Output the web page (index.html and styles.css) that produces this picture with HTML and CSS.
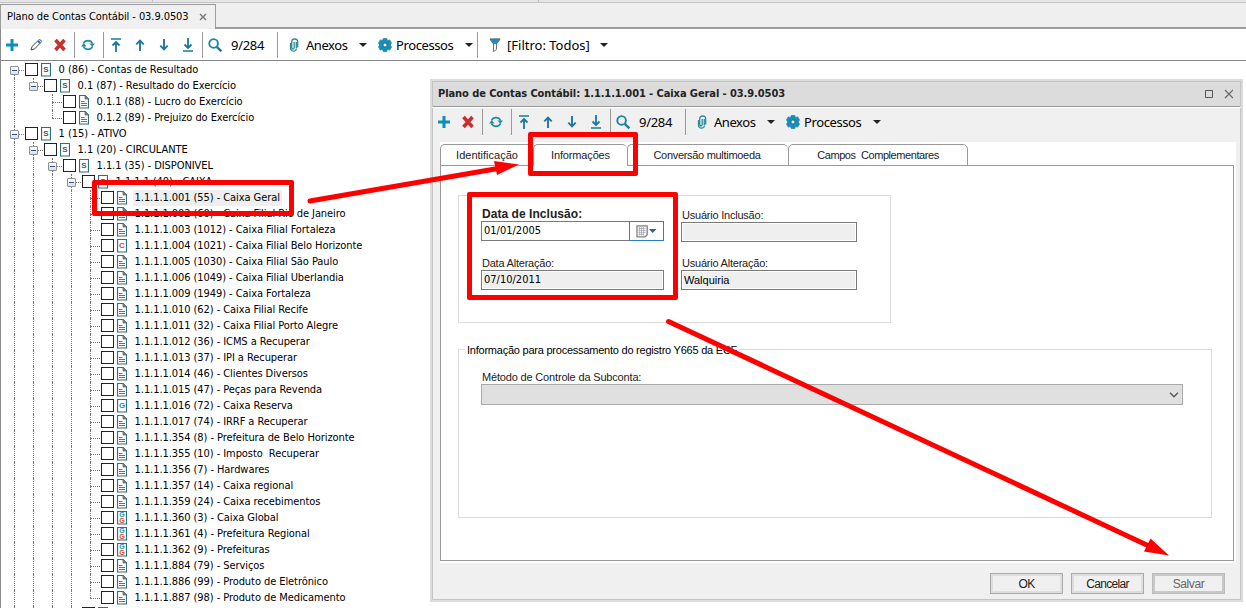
FILE: index.html
```html
<!DOCTYPE html>
<html lang="pt-BR">
<head>
  <meta charset="UTF-8" />
  <title>Plano de Contas Contábil</title>
  <link rel="stylesheet" href="styles.css">
</head>
<body>

  <svg class="sprite">
    <symbol id="i-plus" viewBox="0 0 12 12"><path d="M6 0v12M0 6h12" stroke="#0d8dba" stroke-width="3"/></symbol>
    <symbol id="i-pencil" viewBox="0 0 12 12"><path d="M1 11l1-3.500L8.500 1.200q1.300-1 2.300 0t0 2.300L4.500 10z" fill="#fff" stroke="#3b4a55"/><path d="M8 2l2 2" stroke="#2a6fb5" stroke-width="2"/></symbol>
    <symbol id="i-del" viewBox="0 0 12 12"><path d="M1.500 1l9 10M10.500 1l-9 10" stroke="#c62f2a" stroke-width="3.600"/></symbol>
    <symbol id="i-refresh" viewBox="0 0 14 12"><path d="M2.500 4.500A4.900 4.900 0 0 1 11.500 4.500M11.500 7.500A4.900 4.900 0 0 1 2.500 7.500" fill="none" stroke="#1e8c9b" stroke-width="1.700"/><path d="M8.500 4.500H14L11.300 7.800zM0 7.500h5.500L2.700 4.200z" fill="#1e8c9b"/></symbol>
    <symbol id="i-first" viewBox="0 0 12 14"><path d="M1 1h10" stroke="#1d8a94" stroke-width="1.600"/><path d="M6 14V5M2.500 7.500L6 4l3.500 3.500" fill="none" stroke="#1c75a6" stroke-width="1.800"/></symbol>
    <symbol id="i-up" viewBox="0 0 12 14"><path d="M6 13V3M2.300 6.300L6 2.600l3.700 3.700" fill="none" stroke="#1c75a6" stroke-width="1.900"/></symbol>
    <symbol id="i-down" viewBox="0 0 12 14"><path d="M6 1v10M2.300 7.700L6 11.400l3.700-3.700" fill="none" stroke="#1c75a6" stroke-width="1.900"/></symbol>
    <symbol id="i-last" viewBox="0 0 12 14"><path d="M1 13h10" stroke="#1d8a94" stroke-width="1.600"/><path d="M6 0v9M2.500 6.500L6 10l3.500-3.500" fill="none" stroke="#1c75a6" stroke-width="1.800"/></symbol>
    <symbol id="i-search" viewBox="0 0 14 14"><circle cx="5.600" cy="5.400" r="4.300" fill="none" stroke="#1d86a3" stroke-width="1.900"/><path d="M8.800 8.800l4.500 4.500" stroke="#1d7f94" stroke-width="2.400"/></symbol>
    <symbol id="i-clip" viewBox="0 0 10 14"><path d="M5.200 4v6M1.500 5v5.500q.5 2.700 3 2.700t3-2.700M8.700 9.500V4q0-3-3-3t-3 3v5.500q.3 1.500 1.300 1.500t1.200-1.500M7.300 4v6" fill="none" stroke="#2b8d9c" stroke-width="1.300"/></symbol>
    <symbol id="i-gear" viewBox="0 0 14 14"><path d="M5.300.5h3.400l.7 2 2.300-.6 1.800 3L12.200 7l1.300 2.100-1.800 3-2.300-.6-.7 2H5.300l-.7-2-2.300.6-1.800-3L1.800 7 .5 4.900l1.800-3 2.300.6z" fill="#0a94c4" stroke="#3f7f96" stroke-width=".8"/><circle cx="7" cy="7" r="2.100" fill="#fff" stroke="#3a5c70"/></symbol>
    <symbol id="i-filter" viewBox="0 0 12 14"><path d="M1 1h10L7.500 6v5.500l-3 2V6z" fill="#fff" stroke="#68767c"/><path d="M1 1h10L7.500 5.500h-3z" fill="#0d94c6" stroke="#5a6c74" stroke-width=".8"/></symbol>
    <symbol id="i-doc" viewBox="0 0 10 14"><path d="M.5.5h5.500l3.500 3.500v9H.5z" fill="#fff" stroke="#376d76" stroke-width="1.200"/><path d="M6 .5V4h3.500z" fill="#7d878b" stroke="#555f63" stroke-width=".7"/><path d="M2 6.500h3.500M2 8.500h6M2 10.500h6" stroke="#168cc0"/></symbol>
    <symbol id="i-card" viewBox="0 0 10 14"><path d="M.5.5h9v12.500h-9z" fill="#fff" stroke="#2f6f76" stroke-width="1.200"/></symbol>
  </svg>

  <div class="strip"><i></i><i></i></div>
  <div class="page-tabs">
    <div class="page-tab"><span>Plano de Contas Contábil - 03.9.0503</span>
      <svg width="8" height="8" viewBox="0 0 8 8"><path d="M1 1l6 6M7 1l-6 6" stroke="#777" stroke-width="1.400"/></svg>
    </div>
  </div>

  <div class="toolbar main-bar">
    <svg class="w12"><use href="#i-plus"/></svg>
    <svg class="w12"><use href="#i-pencil"/></svg>
    <svg class="w12"><use href="#i-del"/></svg>
    <b class="sep"></b>
    <svg class="w14"><use href="#i-refresh"/></svg>
    <b class="sep"></b>
    <svg class="w12"><use href="#i-first"/></svg>
    <svg class="w12"><use href="#i-up"/></svg>
    <svg class="w12"><use href="#i-down"/></svg>
    <svg class="w12"><use href="#i-last"/></svg>
    <b class="sep"></b>
    <svg class="w14 find"><use href="#i-search"/></svg>
    <span class="counter">9/284</span>
    <b class="sep"></b>
    <svg class="w10 clip"><use href="#i-clip"/></svg>
    <span class="t-anexos">Anexos</span><i class="arrow"></i>
    <svg class="w14 gear"><use href="#i-gear"/></svg>
    <span class="t-proc">Processos</span><i class="arrow"></i>
    <b class="sep tight"></b>
    <svg class="w12 filter"><use href="#i-filter"/></svg>
    <span class="t-filtro">[Filtro: Todos]</span><i class="arrow"></i>
  </div>

  <div class="tree" id="tree"></div>

  <div class="dialog">
    <div class="title">
      <span>Plano de Contas Contábil: 1.1.1.1.001 - Caixa Geral - 03.9.0503</span>
      <svg width="28" height="10" viewBox="0 0 28 10"><path d="M.5 1.500h7v7h-7z" fill="none" stroke="#555"/><path d="M20 1l8 8M28 1l-8 8" stroke="#666" stroke-width="1.200"/></svg>
    </div>
    <div class="toolbar dialog-bar">
      <svg class="w12"><use href="#i-plus"/></svg>
      <svg class="w12"><use href="#i-del"/></svg>
      <b class="sep"></b>
      <svg class="w14"><use href="#i-refresh"/></svg>
      <b class="sep"></b>
      <svg class="w12"><use href="#i-first"/></svg>
      <svg class="w12"><use href="#i-up"/></svg>
      <svg class="w12"><use href="#i-down"/></svg>
      <svg class="w12"><use href="#i-last"/></svg>
      <b class="sep"></b>
      <svg class="w14 find"><use href="#i-search"/></svg>
      <span class="counter">9/284</span>
      <b class="sep"></b>
      <svg class="w10 clip"><use href="#i-clip"/></svg>
      <span class="t-anexos">Anexos</span><i class="arrow"></i>
      <svg class="w14 gear"><use href="#i-gear"/></svg>
      <span class="t-proc">Processos</span><i class="arrow"></i>
    </div>
    <div class="pages">
      <div class="tabs">
        <div class="tab tab-id">Identificação</div>
        <div class="tab tab-info active">Informações</div>
        <div class="tab tab-conv">Conversão multimoeda</div>
        <div class="tab tab-comp">Campos&nbsp; Complementares</div>
      </div>
      <div class="content">
        <div class="group dates">
          <div class="field">
            <label class="strong">Data de Inclusão:</label>
            <div class="input date"><span>01/01/2005</span>
              <div class="picker"><svg width="22" height="13" viewBox="0 0 22 13"><path d="M1 .8h10.200v9l-2 2H1z" fill="#f5f5f5" stroke="#8a8080" stroke-width="1.300"/><path d="M2.500 3.500h7M2.500 5.500h7M2.500 7.500h7M2.500 9.500h5M3.500 2v8.500M5.500 2v8.500M7.500 2v8.500" stroke="#a5adba" stroke-width=".8"/><path d="M13 4h7.500L16.700 8z" fill="#3e5c8c"/></svg></div>
            </div>
          </div>
          <div class="field right">
            <label>Usuário Inclusão:</label>
            <div class="input off"></div>
          </div>
          <div class="field">
            <label>Data Alteração:</label>
            <div class="input off"><span>07/10/2011</span></div>
          </div>
          <div class="field right">
            <label>Usuário Alteração:</label>
            <div class="input off"><span class="user">Walquiria</span></div>
          </div>
        </div>
        <div class="group ecf">
          <div class="legend"><span>Informação para processamento do registro Y665 da ECF</span></div>
          <label>Método de Controle da Subconta:</label>
          <div class="select"><svg width="10" height="6" viewBox="0 0 10 6"><path d="M1 .8l4 4 4-4" fill="none" stroke="#555" stroke-width="1.300"/></svg></div>
        </div>
      </div>
    </div>
    <div class="buttons">
      <div class="btn">OK</div>
      <div class="btn">Cancelar</div>
      <div class="btn disabled">Salvar</div>
    </div>
  </div>

  <div class="mark mark-node"></div>
  <div class="mark mark-tab"></div>
  <div class="mark mark-dates"></div>
  <svg class="arrows" width="1246" height="608" viewBox="0 0 1246 608">
    <path d="M310 201L498 168.500M668.500 321.500L1150 546.500" stroke="#f00" stroke-width="5" stroke-linecap="round"/>
    <path d="M519 164.500L494 161l3 14zM1169 555.500L1150.500 538.500l-6.500 13z" fill="#f00"/>
  </svg>

  <script src="script.js"></script>
</body>
</html>
```

FILE: styles.css
```css
body {
  margin: 0;
  width: 1246px;
  height: 608px;
  overflow: hidden;
  position: relative;
  background: #fff;
  color: #000;
  font-family: "DejaVu Sans Condensed", "DejaVu Sans", sans-serif;
  font-stretch: condensed;
  font-size: 11px;
  line-height: 16px;
  white-space: nowrap;
}
* {
  box-sizing: border-box;
}
.sprite {
  display: none;
}
svg {
  display: block;
  flex: none;
}

/* top tabs */
.strip {
  height: 3px;
  background: #e5e5e5;
  border-bottom: 1px solid #c4c4c4;
  display: flex;
}
.strip i {
  width: 153px;
  border-right: 1px solid #c0c0c0;
}
.strip i + i {
  width: 386px;
}
.page-tabs {
  height: 26px;
  padding-top: 1px;
  background: #efefef;
  box-shadow: inset 0 -2px #9d9d9d;
}
.page-tab {
  width: 216px;
  height: 25px;
  padding: 0 8px 1px 6px;
  display: flex;
  align-items: center;
  justify-content: space-between;
  background: #f0f0f0;
  border: 1px solid #9d9d9d;
  border-bottom: 0;
}
.page-tab span {
  letter-spacing: -0.08px;
}

/* toolbars */
.toolbar {
  display: flex;
  align-items: center;
  font-family: "Noto Sans", sans-serif;
  font-size: 13px;
}
.toolbar svg {
  height: 14px;
  margin-right: 12px;
}
.w10 { width: 10px; }
.w12 { width: 12px; }
.w14 { width: 14px; }
.main-bar {
  height: 32px;
  padding-left: 5px;
  border-left: 1px solid #8c8c8c;
  border-bottom: 1px solid #85858c;
}
.sep {
  width: 1px;
  height: 26px;
  margin: 0 6px 0 -4px;
  background: #999;
}
.toolbar .find {
  margin: 0 9px 0 -1px;
}
.counter {
  width: 50px;
  letter-spacing: -0.3px;
}
.toolbar .clip {
  margin: 0 7px 0 5px;
}
.t-anexos {
  width: 53px;
  letter-spacing: -0.45px;
}
.t-proc {
  width: 69px;
  letter-spacing: -0.4px;
}
.t-filtro {
  width: 93px;
}
.arrow {
  width: 0;
  border: 4px solid transparent;
  border-top: 4px solid #222;
  border-bottom: 0;
}
.toolbar .gear {
  margin: 0 4px 0 11px;
}
.sep.tight {
  margin: 0 11px 0 4px;
}
.toolbar .filter {
  margin-right: 6px;
}

/* tree */
.tree {
  height: 547px;
  padding-top: 1px;
  border-left: 1px solid #8c8c8c;
  overflow: hidden;
}
.row {
  display: flex;
  height: 16px;
  padding-left: 4px;
  align-items: flex-start;
}
.cell {
  width: 19px;
  height: 16px;
  flex: none;
  position: relative;
}
.cell.down::before,
.cell.half::before,
.cell.under::before {
  content: "";
  position: absolute;
  left: 9px;
  top: 0;
  height: 16px;
  border-left: 1px dotted #777;
}
.cell.half::before {
  height: 8px;
}
.cell.under::before {
  top: 8px;
  height: 8px;
}
.cell.dash::after {
  content: "";
  position: absolute;
  left: 9px;
  top: 8px;
  width: 10px;
  border-top: 1px dotted #777;
}
.toggle {
  position: absolute;
  z-index: 1;
  left: 5px;
  top: 4px;
  width: 9px;
  height: 9px;
  background: linear-gradient(#fff, #ddd);
  border: 1px solid #919191;
  border-radius: 1px;
}
.toggle::after {
  content: "";
  display: block;
  width: 5px;
  height: 1px;
  margin: 3px 1px;
  background: #31509c;
}
.check {
  width: 13px;
  height: 13px;
  margin: 1px 3px 0 1px;
  flex: none;
  border: 1px solid #222;
  background: #fff;
}
.icon {
  position: relative;
  width: 10px;
  height: 14px;
  margin-top: 1px;
  flex: none;
}
.icon span {
  position: absolute;
  inset: 0;
  text-align: center;
  font: bold 8px/14px "Liberation Sans", sans-serif;
}
.icon .s { color: #555; }
.icon .r { color: #cf4436; }
.icon .g { color: #1a86be; }
.icon .top,
.icon .bottom {
  top: -3px;
  font-size: 7px;
}
.icon .bottom {
  top: 3px;
}
.name {
  height: 16px;
  margin-left: 5.6px;
  padding: 0 2px;
  letter-spacing: -0.07px;
}
.name.selected {
  background: #efefef;
}

/* dialog */
.dialog {
  position: absolute;
  left: 430px;
  top: 79px;
  width: 813px;
  height: 523px;
  border: 2px solid #dcdcdc;
  background: #f0f0f0;
  box-shadow: inset 0 0 0 1px #c4c4c4;
}
.title {
  height: 25px;
  margin: 1px 1px 0;
  padding: 0 7px 1px 5px;
  display: flex;
  align-items: center;
  justify-content: space-between;
  background: #dcdcdc;
  border-bottom: 1px solid #999;
  font-weight: bold;
  letter-spacing: -0.08px;
  color: #222;
}
.dialog-bar {
  height: 34px;
  padding: 0 0 5px 6px;
  border-top: 1px solid #fff;
}
.pages {
  width: 796px;
  height: 421px;
  margin: 1px 0 0 8px;
  padding-top: 2px;
  background: #fff;
}
.tabs {
  display: flex;
  font-family: "Liberation Sans", Arial, sans-serif;
  letter-spacing: -0.3px;
  color: #222;
}
.tab {
  height: 22px;
  padding-top: 2px;
  text-align: center;
  border: 1px solid #999;
  border-right: 0;
  border-radius: 5px 5px 0 0;
}
.tab:last-child {
  border-right: 1px solid #999;
  letter-spacing: -0.42px;
}
.tab.active {
  border-bottom-color: #fff;
}
.tab-id {
  width: 93px;
  letter-spacing: 0;
}
.tab-info {
  width: 94px;
  letter-spacing: -0.15px;
}
.tab-conv {
  width: 161px;
  padding-right: 2px;
}
.tab-comp { width: 180px; }
.content {
  width: 794px;
  height: 396px;
  margin-top: -1px;
  padding: 30px 21px 0 17px;
  border: 1px solid #999;
  border-top: 0;
  background: linear-gradient(#999, #999) 0 0 / 93px 1px no-repeat,
    linear-gradient(#999, #999) 187px 0 / 610px 1px no-repeat;
}
.group {
  border: 1px solid #dcdcdc;
  font-family: "Liberation Sans", Arial, sans-serif;
  color: #222;
}
.dates {
  width: 433px;
  height: 128px;
  padding: 11px 0 0 22px;
  display: grid;
  grid-template-columns: 200px 176px;
  grid-auto-rows: 48px;
  align-content: start;
}
.field {
  width: 183px;
}
.field.right {
  width: 176px;
}
label {
  display: block;
  height: 15px;
  margin-left: 1px;
  line-height: 17px;
  letter-spacing: -0.22px;
}
.strong {
  height: 14px;
  line-height: 15px;
  font-weight: bold;
  font-size: 12px;
  letter-spacing: 0.05px;
}
.input {
  height: 20px;
  display: flex;
  justify-content: space-between;
  padding-left: 2px;
  line-height: 18px;
  color: #000;
  border: 1px solid #7a7a7a;
  background: #fff;
}
.input.off {
  background: #efefef;
  box-shadow: inset 0 0 0 1px #fff;
}
.input span {
  font-family: "DejaVu Sans Condensed", sans-serif;
}
.input .user {
  font-family: "Liberation Sans", Arial, sans-serif;
}
.picker {
  width: 35px;
  margin: -1px;
  padding: 3px 0 0 6px;
  border: 1px solid #2a80d0;
}
.ecf {
  height: 169px;
  margin-top: 26px;
  padding-left: 22px;
}
.legend {
  height: 19px;
  margin: -8px 0 0 -16px;
  letter-spacing: -0.23px;
  color: #000;
}
.legend span {
  display: inline-block;
  padding: 0 2px;
  background: #fff;
}
.ecf label {
  margin-top: 8px;
  letter-spacing: -0.17px;
}
.select {
  width: 702px;
  height: 21px;
  display: flex;
  justify-content: flex-end;
  align-items: center;
  padding-right: 3px;
  background: #e0e0e0;
  border: 1px solid #aaa;
}
.buttons {
  display: flex;
  justify-content: flex-end;
  gap: 8px;
  margin: 10px 16px 0 0;
  font-family: "Liberation Sans", Arial, sans-serif;
  font-size: 12px;
}
.btn {
  width: 73px;
  height: 21px;
  line-height: 20px;
  text-align: center;
  color: #222;
  letter-spacing: -0.7px;
  border: 1px solid #aaa;
  box-shadow: inset 0 0 0 2px #dedede;
}
.btn.disabled {
  color: #666;
  letter-spacing: -0.4px;
  border-color: #bbb;
  box-shadow: inset 0 0 0 2px #c8c8c8;
}

/* highlights */
.mark {
  position: absolute;
  border: 5px solid #f00;
  border-radius: 2px;
}
.mark-node {
  left: 92px;
  top: 180px;
  width: 202px;
  height: 36px;
}
.mark-tab {
  left: 528px;
  top: 132px;
  width: 110px;
  height: 44px;
}
.mark-dates {
  left: 467px;
  top: 192px;
  width: 211px;
  height: 108px;
}
.arrows {
  position: absolute;
  left: 0;
  top: 0;
}
```

FILE: script.js
```js
// level, icon, text
const accounts = [
  [0, 's', '0 (86) - Contas de Resultado'],
  [1, 's', '0.1 (87) - Resultado do Exercício'],
  [2, 'doc', '0.1.1 (88) - Lucro do Exercício'],
  [2, 'doc', '0.1.2 (89) - Prejuizo do Exercício'],
  [0, 's', '1 (15) - ATIVO'],
  [1, 's', '1.1 (20) - CIRCULANTE'],
  [2, 's', '1.1.1 (35) - DISPONIVEL'],
  [3, 's', '1.1.1.1 (40) - CAIXA'],
  [4, 'doc', '1.1.1.1.001 (55) - Caixa Geral'],
  [4, 'doc', '1.1.1.1.002 (60) - Caixa Filial Rio de Janeiro'],
  [4, 'doc', '1.1.1.1.003 (1012) - Caixa Filial Fortaleza'],
  [4, 'r', '1.1.1.1.004 (1021) - Caixa Filial Belo Horizonte'],
  [4, 'doc', '1.1.1.1.005 (1030) - Caixa Filial São Paulo'],
  [4, 'doc', '1.1.1.1.006 (1049) - Caixa Filial Uberlandia'],
  [4, 'doc', '1.1.1.1.009 (1949) - Caixa Fortaleza'],
  [4, 'doc', '1.1.1.1.010 (62) - Caixa Filial Recife'],
  [4, 'doc', '1.1.1.1.011 (32) - Caixa Filial Porto Alegre'],
  [4, 'doc', '1.1.1.1.012 (36) - ICMS a Recuperar'],
  [4, 'doc', '1.1.1.1.013 (37) - IPI a Recuperar'],
  [4, 'doc', '1.1.1.1.014 (46) - Clientes Diversos'],
  [4, 'doc', '1.1.1.1.015 (47) - Peças para Revenda'],
  [4, 'g', '1.1.1.1.016 (72) - Caixa Reserva'],
  [4, 'doc', '1.1.1.1.017 (74) - IRRF a Recuperar'],
  [4, 'doc', '1.1.1.1.354 (8) - Prefeitura de Belo Horizonte'],
  [4, 'doc', '1.1.1.1.355 (10) - Imposto\u00a0 Recuperar'],
  [4, 'doc', '1.1.1.1.356 (7) - Hardwares'],
  [4, 'doc', '1.1.1.1.357 (14) - Caixa regional'],
  [4, 'doc', '1.1.1.1.359 (24) - Caixa recebimentos'],
  [4, 'gr', '1.1.1.1.360 (3) - Caixa Global'],
  [4, 'gr', '1.1.1.1.361 (4) - Prefeitura Regional'],
  [4, 'gr', '1.1.1.1.362 (9) - Prefeituras'],
  [4, 'doc', '1.1.1.1.884 (79) - Serviços'],
  [4, 'doc', '1.1.1.1.886 (99) - Produto de Eletrônico'],
  [4, 'doc', '1.1.1.1.887 (98) - Produto de Medicamento'],
  [3, '', '']
];

const letters = {
  s: '<span class="s">S</span>',
  r: '<span class="r">C</span>',
  g: '<span class="g">G</span>',
  gr: '<span class="g top">G</span><span class="r bottom">G</span>'
};

function continues(index, level) {
  for (let i = index + 1; i < accounts.length; i++) {
    if (accounts[i][0] < level) return index >= 4 && level < 4;
    if (accounts[i][0] === level) return true;
  }
  return level < 4;
}

const html = accounts.map(([level, icon, text], index) => {
  let cells = '';
  for (let l = 0; l < level; l++) {
    cells += `<div class="cell ${continues(index, l) ? 'down' : ''}"></div>`;
  }
  const more = continues(index, level);
  const line = index === 0 ? 'under' : more ? 'down' : 'half';
  const parent = (accounts[index + 1] || [0])[0] > level;
  cells += `<div class="cell dash ${line}">${parent ? '<i class="toggle"></i>' : ''}</div>`;
  const symbol = icon === 'doc' ? 'i-doc' : 'i-card';
  return `<div class="row">${cells}<div class="check"></div>
    <div class="icon"><svg width="10" height="14"><use href="#${symbol}"/></svg>${letters[icon] || ''}</div>
    <div class="name ${index === 8 ? 'selected' : ''}">${text}</div></div>`;
});

document.getElementById('tree').innerHTML = html.join('');
```
